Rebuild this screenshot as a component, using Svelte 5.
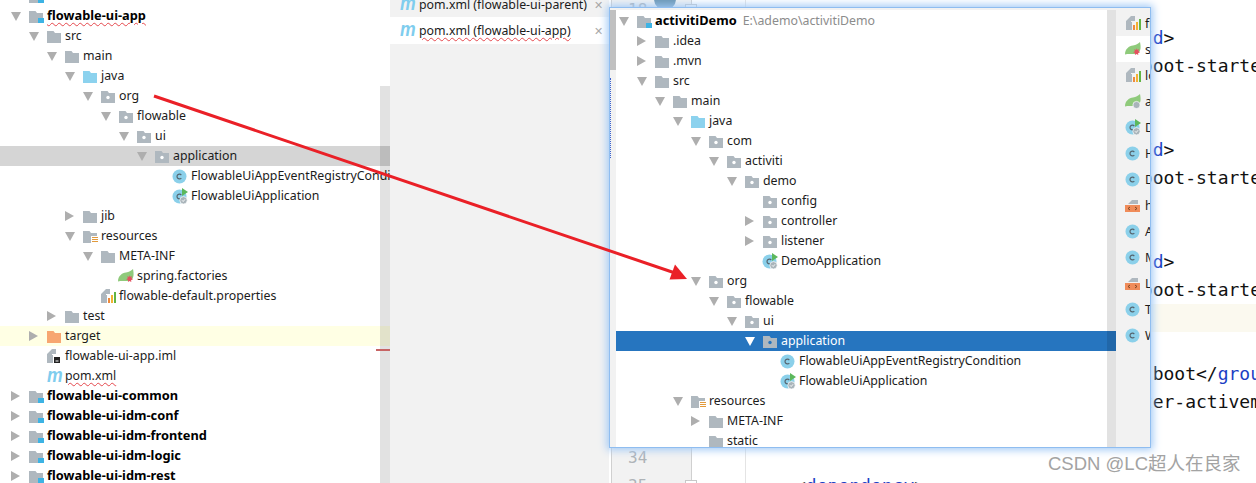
<script>
	const projectRows = [
		{ d: 0, icon: 'module' },
		{ d: 0, open: true, icon: 'module', label: 'flowable-ui-app', bold: true, wavy: true },
		{ d: 1, open: true, icon: 'folder', label: 'src' },
		{ d: 2, open: true, icon: 'folder', label: 'main' },
		{ d: 3, open: true, icon: 'source', label: 'java' },
		{ d: 4, open: true, icon: 'package', label: 'org' },
		{ d: 5, open: true, icon: 'package', label: 'flowable' },
		{ d: 6, open: true, icon: 'package', label: 'ui' },
		{ d: 7, open: true, icon: 'package', label: 'application', state: 'selected' },
		{ d: 8, icon: 'class', label: 'FlowableUiAppEventRegistryCondition' },
		{ d: 8, icon: 'runclass', label: 'FlowableUiApplication' },
		{ d: 3, open: false, icon: 'folder', label: 'jib' },
		{ d: 3, open: true, icon: 'resources', label: 'resources' },
		{ d: 4, open: true, icon: 'folder', label: 'META-INF' },
		{ d: 5, icon: 'spring', label: 'spring.factories' },
		{ d: 4, icon: 'props', label: 'flowable-default.properties' },
		{ d: 2, open: false, icon: 'folder', label: 'test' },
		{ d: 1, open: false, icon: 'excluded', label: 'target', state: 'ignored' },
		{ d: 1, icon: 'iml', label: 'flowable-ui-app.iml' },
		{ d: 1, icon: 'maven', label: 'pom.xml', wavy: true },
		{ d: 0, open: false, icon: 'module', label: 'flowable-ui-common', bold: true },
		{ d: 0, open: false, icon: 'module', label: 'flowable-ui-idm-conf', bold: true },
		{ d: 0, open: false, icon: 'module', label: 'flowable-ui-idm-frontend', bold: true },
		{ d: 0, open: false, icon: 'module', label: 'flowable-ui-idm-logic', bold: true },
		{ d: 0, open: false, icon: 'module', label: 'flowable-ui-idm-rest', bold: true }
	];

	const popupRows = [
		{ d: 0, open: true, icon: 'module', label: 'activitiDemo', bold: true, path: 'E:\\ademo\\activitiDemo' },
		{ d: 1, open: false, icon: 'folder', label: '.idea' },
		{ d: 1, open: false, icon: 'folder', label: '.mvn' },
		{ d: 1, open: true, icon: 'folder', label: 'src' },
		{ d: 2, open: true, icon: 'folder', label: 'main' },
		{ d: 3, open: true, icon: 'source', label: 'java' },
		{ d: 4, open: true, icon: 'package', label: 'com' },
		{ d: 5, open: true, icon: 'package', label: 'activiti' },
		{ d: 6, open: true, icon: 'package', label: 'demo' },
		{ d: 7, icon: 'package', label: 'config' },
		{ d: 7, open: false, icon: 'package', label: 'controller' },
		{ d: 7, open: false, icon: 'package', label: 'listener' },
		{ d: 7, icon: 'runclass', label: 'DemoApplication' },
		{ d: 4, open: true, icon: 'package', label: 'org' },
		{ d: 5, open: true, icon: 'package', label: 'flowable' },
		{ d: 6, open: true, icon: 'package', label: 'ui' },
		{ d: 7, open: true, icon: 'package', label: 'application', state: 'active' },
		{ d: 8, icon: 'class', label: 'FlowableUiAppEventRegistryCondition' },
		{ d: 8, icon: 'runclass', label: 'FlowableUiApplication' },
		{ d: 3, open: true, icon: 'resources', label: 'resources' },
		{ d: 4, open: false, icon: 'folder', label: 'META-INF' },
		{ d: 4, icon: 'folder', label: 'static' }
	];

	const recentFiles = [
		{ icon: 'props', label: 'flowable-default.properties' },
		{ icon: 'spring', label: 'spring.factories', current: true },
		{ icon: 'props', label: 'log4j.properties' },
		{ icon: 'springboot', label: 'application.yml' },
		{ icon: 'runclass', label: 'DemoApplication' },
		{ icon: 'class', label: 'HelloController' },
		{ icon: 'class', label: 'DemoService' },
		{ icon: 'html', label: 'hello.html' },
		{ icon: 'class', label: 'ActivitiConfig' },
		{ icon: 'class', label: 'MyListener' },
		{ icon: 'html', label: 'Login.html' },
		{ icon: 'class', label: 'TaskListener' },
		{ icon: 'class', label: 'WorkflowController' }
	];

	const dep = (group, artifact) => [
		`<dependency>`,
		`    <groupId>${group}</groupId>`,
		`    <artifactId>${artifact}</artifactId>`,
		`</dependency>`
	];

	const code = [
		'',
		...dep('org.activiti', 'activiti-spring-boot-starter').slice(1),
		...dep('org.activiti', 'activiti-spring-boot-starter-web'),
		...dep('org.activiti', 'activiti-spring-boot-starter-jpa'),
		...dep('org.springframework.boot', 'spring-boot-starter-activemq'),
		'',
		'<dependency>'
	];
	const firstLine = 18;
	const currentLine = 29;

	// splits an xml line so tag names get their own colour
	function tokens(line) {
		return line.split(/(<\/?[a-zA-Z]+)/).map((part) => {
			const m = part.match(/^(<\/?)([a-zA-Z]+)$/);
			return m ? [{ t: m[1] }, { t: m[2], tag: true }] : [{ t: part }];
		}).flat();
	}
</script>

{#snippet docBase()}
	<path class="gray" d="M1 6l5-5h4v5h-4v1h1v8H1z" />
{/snippet}

{#snippet icon(kind)}
	{#if kind === 'folder' || kind === 'package' || kind === 'source' || kind === 'excluded' || kind === 'module' || kind === 'resources'}
		<svg class="ico" width="16" height="14" viewBox="0 0 16 14">
			<path class={kind === 'source' ? 'blue' : kind === 'excluded' ? 'orange' : 'gray'} d="M1 2h6.500l1.500 2h6v10H1z" />
			{#if kind === 'package'}
				<circle class="dot" cx="8" cy="8.500" r="1.700" />
			{/if}
			{#if kind === 'module'}
				<rect class="modsq" x="10" y="9" width="6" height="6" />
			{/if}
			{#if kind === 'resources'}
				<rect x="9" y="7" width="7" height="8" fill="#fff" />
				<path d="M10 8.500h6M10 10.500h6M10 12.500h6M10 14.500h6" stroke="#e29a3c" stroke-width="1" />
			{/if}
		</svg>
	{:else if kind === 'class' || kind === 'runclass'}
		<svg class="ico" width="16" height="16" viewBox="0 0 16 16">
			<circle cx="7.500" cy="8.500" r="7" fill="#8bd0ea" />
			<path d="M9.300 7a2.400 2.400 0 1 0 0 3" fill="none" stroke="#55656f" stroke-width="1.200" />
			{#if kind === 'runclass'}
				<path d="M10 0l6 4-6 4z" fill="#5cb85c" />
				<circle cx="11.500" cy="12.300" r="3.700" fill="#a9b4ba" stroke="#fff" stroke-width=".7" />
				<path d="M10 12.300l1.200 1.200 1.800-2.200" fill="none" stroke="#fff" stroke-width=".9" />
			{/if}
		</svg>
	{:else if kind === 'spring' || kind === 'springboot'}
		<svg class="ico" width="16" height="16" viewBox="0 0 16 16">
			<path d="M0 13.500C0 8 4 5 8 4.500c3-.5 5-1.500 7-3.500 1 5 1 9-2 11-3 2-9 0-13 1.500z" fill="#8fca7b" />
			{#if kind === 'spring'}
				<path d="M11 7l1 1.800 2-.6-.7 1.900 1.800 1.200-2 .6.200 2-1.800-1-1.600 1.200.2-2.200-2-.6 1.800-1.100-.7-2 2 .7z" fill="#e4505f" />
			{:else}
				<circle cx="11.500" cy="12" r="3.600" fill="#a9b4ba" stroke="#fff" stroke-width=".7" />
			{/if}
		</svg>
	{:else if kind === 'props'}
		<svg class="ico" width="16" height="16" viewBox="0 0 16 16">
			{@render docBase()}
			<rect x="8" y="10" width="2" height="5" fill="#ef8a3c" />
			<rect x="11" y="7" width="2" height="8" fill="#f2b233" />
			<rect x="14" y="4" width="2" height="11" fill="#62b543" />
		</svg>
	{:else if kind === 'iml'}
		<svg class="ico" width="16" height="16" viewBox="0 0 16 16">
			{@render docBase()}
			<rect x="8" y="9" width="6" height="6" fill="#222" />
			<rect x="9.500" y="12.500" width="3" height="1" fill="#fff" />
		</svg>
	{:else if kind === 'html'}
		<svg class="ico" width="16" height="16" viewBox="0 0 16 16">
			<path class="gray" d="M3 7l4-4h6v4z" />
			<rect x="0" y="8" width="15" height="7" fill="#f08c5a" />
			<path d="M5 10l-2 1.500L5 13M10 10l2 1.500L10 13" fill="none" stroke="#70401f" stroke-width=".9" />
		</svg>
	{:else if kind === 'maven'}
		<span class="maven">m</span>
	{/if}
{/snippet}

{#snippet tree(rows, origin)}
	{#each rows as row}
		<div class="row {row.state ?? ''}" style="padding-left: {origin + row.d * 18}px">
			<span class="twisty">
				{#if row.open === true}
					<svg width="10" height="9" viewBox="0 0 10 9"><path d="M0 0h10L5 9z" /></svg>
				{:else if row.open === false}
					<svg width="9" height="10" viewBox="0 0 9 10"><path d="M0 0l9 5-9 5z" /></svg>
				{/if}
			</span>
			<span class="slot">{@render icon(row.icon)}</span>
			{#if row.label}
				<span class="label" class:bold={row.bold} class:wavy={row.wavy}>{row.label}</span>
			{/if}
			{#if row.path}
				<span class="path">{row.path}</span>
			{/if}
		</div>
	{/each}
{/snippet}

<div class="screen">
	<aside class="project">
		{@render tree(projectRows, 11)}
		<div class="scroll-thumb"></div>
		<div class="error-mark"></div>
	</aside>

	<section class="tabs">
		<div class="tab">
			<span class="maven">m</span>
			<span class="tab-name">pom.xml (flowable-ui-parent)</span>
			<span class="close">✕</span>
		</div>
		<div class="tab current">
			<span class="maven">m</span>
			<span class="tab-name wavy">pom.xml (flowable-ui-app)</span>
			<span class="close">✕</span>
		</div>
	</section>

	<section class="editor">
		<div class="gutter">
			{#each code as _, i}
				<div class="gutter-line">
					<span class="num">{firstLine + i}</span>
					{#if i === 0}<span class="mark"></span>{/if}
					{#if i === 0 || i === code.length - 1}<span class="fold"></span>{/if}
				</div>
			{/each}
		</div>
		<div class="code">
			{#each code as line, i}
				<div class="line" class:hl={firstLine + i === currentLine}>{#each tokens(line) as tok}<span class:tag={tok.tag}>{tok.t}</span>{/each}</div>
			{/each}
		</div>
	</section>

	<div class="popup">
		<div class="strip">
			<div class="strip-thumb"></div>
			<div class="strip-dots"></div>
		</div>
		<div class="popup-tree">
			{@render tree(popupRows, 3)}
			<div class="popup-thumb"></div>
		</div>
		<div class="recent">
			{#each recentFiles as file}
				<div class="recent-row" class:current={file.current}>
					<span class="slot">{@render icon(file.icon)}</span>
					<span class="recent-name">{file.label}</span>
				</div>
			{/each}
		</div>
	</div>

	<svg class="arrow" width="1256" height="483" viewBox="0 0 1256 483">
		<path d="M154 96L678 274" stroke="#ea2027" stroke-width="3" fill="none" />
		<path d="M687 279L669.500 279.500L675 264.500z" fill="#ea2027" />
	</svg>

	<span class="watermark">CSDN @LC超人在良家</span>
</div>

<style>
	:global(body) {
		margin: 0;
		background: #fff;
	}

	.screen {
		position: relative;
		display: flex;
		width: 1256px;
		height: 483px;
		overflow: hidden;
		font-family: "Noto Sans", "Noto Sans CJK SC", sans-serif;
		font-size: 12.350px;
		color: #1c1c1c;
	}

	.project {
		position: relative;
		flex: 0 0 390px;
		margin-top: -14px;
		height: 497px;
		overflow: hidden;
		background: #fff;
	}

	.row {
		display: flex;
		align-items: center;
		height: 20px;
		white-space: nowrap;
		box-sizing: border-box;
	}

	.row.selected {
		background: #d5d5d5;
	}

	.row.ignored {
		background: #ffffe4;
	}

	.row.active {
		background: #2675bf;
		color: #fff;
	}

	.twisty {
		flex: 0 0 18px;
		display: flex;
		align-items: center;
	}

	.twisty path {
		fill: #aeaeae;
	}

	.active .twisty path {
		fill: #fff;
	}

	.slot {
		flex: 0 0 18px;
		display: flex;
		align-items: center;
		height: 16px;
	}

	.ico {
		display: block;
		margin-left: -1px;
	}

	.gray {
		fill: #afb8bf;
	}

	.blue {
		fill: #8cd2ee;
	}

	.orange {
		fill: #f7a671;
	}

	.dot {
		fill: #fff;
	}

	.active .dot {
		fill: #2675bf;
	}

	.modsq {
		fill: #3db3e4;
	}

	.maven {
		font-family: "Liberation Sans", sans-serif;
		font-style: italic;
		font-weight: 700;
		font-size: 20px;
		line-height: 16px;
		color: #7fcdee;
		margin-top: -3px;
		transform: scaleX(0.88);
		transform-origin: left center;
	}

	.label {
		line-height: 18px;
	}

	.label.bold {
		font-size: 12.800px;
		font-weight: 700;
		color: #000;
		margin-bottom: 2px;
	}

	.wavy {
		text-decoration: underline wavy #e5484d 1px;
		text-underline-offset: 2px;
	}

	.path {
		margin-left: 6px;
		margin-bottom: 2px;
		color: #8c8c8c;
	}

	.scroll-thumb {
		position: absolute;
		left: 380px;
		top: 100px;
		bottom: 0;
		width: 10px;
		background: rgba(0, 0, 0, 0.115);
	}

	.error-mark {
		position: absolute;
		left: 376px;
		top: 363px;
		width: 14px;
		height: 2px;
		background: #c76464;
	}

	.tabs {
		flex: 0 0 219px;
		background: #f2f2f2;
		display: flex;
		flex-direction: column;
	}

	.tab {
		display: flex;
		align-items: center;
		height: 27px;
		padding-left: 10px;
	}

	.tab:first-child {
		margin-top: -8px;
		height: 25px;
	}

	.tab.current {
		background: #fff;
	}

	.tab .maven {
		width: 19px;
	}

	.tab-name {
		white-space: nowrap;
	}

	.close {
		position: absolute;
		left: 594px;
		font-size: 11px;
		color: #a8a8a8;
	}

	.editor {
		flex: 1;
		display: flex;
		min-width: 0;
		margin-top: -4px;
		font-family: "DejaVu Sans Mono", monospace;
		font-size: 18px;
	}

	.gutter {
		flex: 0 0 79px;
		margin-left: 2px;
		height: 487px;
		background: #f2f2f2;
		border-left: 1px solid #d0d0d0;
		border-right: 1px solid #d0d0d0;
		box-sizing: content-box;
	}

	.gutter-line {
		position: relative;
		height: 28px;
		line-height: 28px;
		padding-left: 16px;
		color: #aeb3b7;
		font-size: 16px;
	}

	.mark {
		position: absolute;
		left: 42px;
		top: -8px;
		width: 22px;
		height: 22px;
		border-radius: 50%;
		background: #6c97b5;
	}

	.fold {
		position: absolute;
		right: -6px;
		top: 8px;
		width: 10px;
		height: 10px;
		background: #fff;
		border: 1px solid #c8c8c8;
	}

	.code {
		flex: 1;
		min-width: 0;
		background: linear-gradient(#e4e4e4, #e4e4e4) 53px 0 / 1px 100% no-repeat;
	}

	.line {
		height: 28px;
		line-height: 28px;
		padding-left: 103px;
		white-space: pre;
		color: #111;
	}

	.line.hl {
		background: #fbf9ef;
	}

	.tag {
		color: #1c3fc4;
	}

	.popup {
		position: absolute;
		left: 609px;
		top: 7px;
		width: 542px;
		height: 441px;
		display: flex;
		border: 1px solid #8fbdf0;
		box-sizing: border-box;
		box-shadow: 0 0 8px 2px #a3caf6;
		background: #f2f2f2;
	}

	.strip {
		position: relative;
		flex: 0 0 6px;
		background: #f2f2f2;
	}

	.strip-thumb {
		height: 60px;
		margin-top: 2px;
		background: #c0c0c0;
	}

	.strip-dots {
		position: absolute;
		left: 0;
		top: 70px;
		height: 80px;
		border-left: 1px dotted #3b63d0;
	}

	.popup-tree {
		position: relative;
		flex: 0 0 500px;
		margin-top: 2px;
		padding-top: 1px;
		background: #fff;
		overflow: hidden;
	}

	.popup-thumb {
		position: absolute;
		left: 491px;
		top: 0;
		bottom: 0;
		width: 9px;
		background: rgba(0, 0, 0, 0.115);
	}

	.recent {
		flex: 1;
		min-width: 0;
		padding-top: 2px;
		overflow: hidden;
	}

	.recent-row {
		display: flex;
		align-items: center;
		height: 26px;
		padding-left: 10px;
		white-space: nowrap;
		overflow: hidden;
	}

	.recent-row.current {
		background: #fff;
	}

	.recent-row .slot {
		flex: 0 0 19px;
	}

	.arrow {
		position: absolute;
		left: 0;
		top: 0;
		pointer-events: none;
	}

	.watermark {
		position: absolute;
		left: 1048px;
		top: 451px;
		font-family: "Liberation Sans", "Noto Sans CJK SC", sans-serif;
		font-size: 18.500px;
		line-height: 26px;
		color: #a3a3a3;
		white-space: nowrap;
	}
</style>
